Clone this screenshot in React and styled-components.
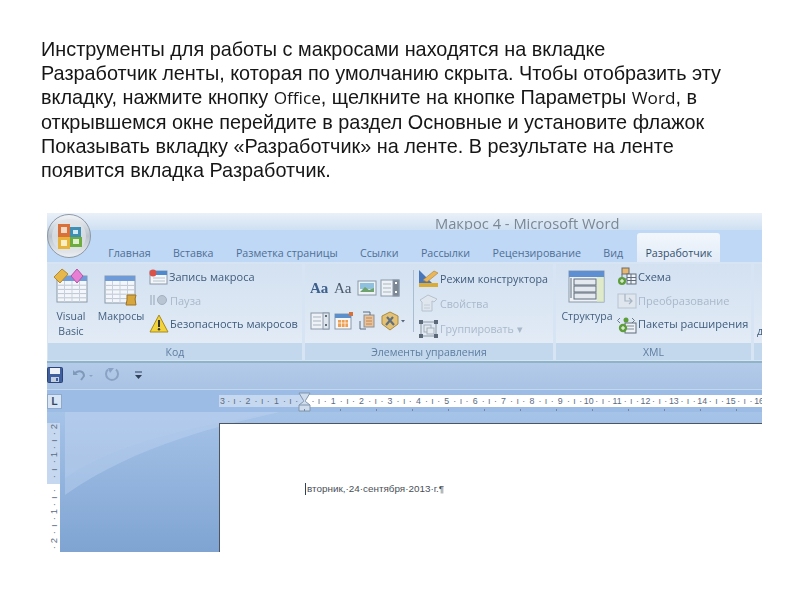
import React from "react";
import styled, { createGlobalStyle } from "styled-components";

const GlobalStyle = createGlobalStyle`
  html, body {
    margin: 0;
    background: #fff;
  }
`;

const Slide = styled.div`
  width: 800px;
  height: 600px;
  overflow: hidden;
  box-sizing: border-box;
  padding: 37px 0 0 41px;
  background: #fff;
`;

const Lead = styled.p`
  margin: 0 0 30.8px;
  font: 19.85px/24.2px "Liberation Sans", Arial, sans-serif;
  color: #161616;
  white-space: nowrap;
  filter: blur(0.3px);

  span {
    font-family: "Open Sans", sans-serif;
    font-size: 17.2px;
    line-height: 0;
  }
`;

const Word = styled.div`
  width: 715px;
  height: 339px;
  margin-left: 6px;
  display: flex;
  flex-direction: column;
  overflow: hidden;
  font-family: "Open Sans", sans-serif;
  filter: blur(0.45px);
`;

const TitleBar = styled.div`
  height: 17px;
  flex: none;
  padding-left: 388px;
  background: linear-gradient(#e9f0f8, #cfe0f3);
  color: #7c8794;
  font-size: 14.7px;
  line-height: 21px;
  white-space: nowrap;
`;

const TabBar = styled.div`
  position: relative;
  height: 32px;
  flex: none;
  box-sizing: border-box;
  display: flex;
  align-items: flex-end;
  padding-left: 50px;
  background: #bfd8f5;
`;

const Orb = styled.svg`
  position: absolute;
  left: 0;
  top: -17px;
`;

const Tab = styled.div`
  height: 29px;
  box-sizing: border-box;
  padding: 13px ${(p) => (p.$active ? "8px" : "11.2px")} 0;
  font-size: 10.7px;
  line-height: 15px;
  color: ${(p) => (p.$active ? "#33516f" : "#4f6f96")};
  white-space: nowrap;
  background: ${(p) => (p.$active ? "linear-gradient(#f2f7fc, #e1ebf7)" : "transparent")};
  border-radius: 3px 3px 0 0;
  margin-left: ${(p) => (p.$active ? "3px" : "0")};
`;

const Ribbon = styled.div`
  height: 101px;
  flex: none;
  box-sizing: border-box;
  display: flex;
  gap: 3px;
  padding: 2px 0 1px 1px;
  background: #d6e4f4;
  border-bottom: 2px solid #8fb4c8;
`;

const Group = styled.div`
  width: ${(p) => p.$w}px;
  flex: none;
  display: flex;
  flex-direction: column;
  border-radius: 3px;
  box-shadow: inset 0 0 0 1px #c6d6e8;
`;

const GroupBody = styled.div`
  flex: 1;
  display: flex;
  background: linear-gradient(#d3e1f1, #e2ebf6);
`;

const GroupLabel = styled.div`
  height: 17px;
  text-align: center;
  font-size: 10.5px;
  line-height: 18px;
  color: #5f7ea0;
  background: #c3d7ed;
`;

const LargeButton = styled.div`
  width: ${(p) => p.$w}px;
  margin-left: ${(p) => p.$ml || 0}px;
  flex: none;
  display: flex;
  flex-direction: column;
  align-items: center;
  padding-top: 2px;
  font-size: 10.5px;
  line-height: 15px;
  color: #44607f;
  text-align: center;
`;

const LargeIcon = styled.div`
  height: 41px;
  box-sizing: border-box;
  padding-bottom: ${(p) => p.$lift || 0}px;
  display: flex;
  align-items: flex-end;
  margin-bottom: 2px;
`;

const CutLabel = styled.div`
  margin: 60px 0 0 3px;
  font-size: 10.5px;
  line-height: 15px;
  color: #44607f;
`;

const SmallColumn = styled.div`
  margin-left: ${(p) => p.$ml || 0}px;
  padding-top: ${(p) => p.$pt || 1}px;
  display: flex;
  flex-direction: column;
  gap: ${(p) => p.$gap || 0}px;
`;

const SmallButton = styled.div`
  height: 23.5px;
  display: flex;
  align-items: center;
  gap: 1px;
  font-size: ${(p) => p.$size || 11}px;
  color: ${(p) => (p.$off ? "#a9b8c9" : "#3f5b7b")};
  white-space: nowrap;
`;

const StyleGrid = styled.div`
  margin: 7px 0 0 5px;
  display: grid;
  grid-template-columns: 24px 23px 23px 24px;
  grid-auto-rows: 33px;
  width: 94px;
  align-items: center;
`;

const Divider = styled.div`
  width: 1px;
  height: 62px;
  margin: 6px 0 0 9px;
  background: #a9bdd4;
`;

const QuickBar = styled.div`
  height: 27px;
  flex: none;
  box-sizing: border-box;
  display: flex;
  align-items: center;
  padding-bottom: 2px;
  background: linear-gradient(#b4cbe9, #a9c3e5);
  border-bottom: 1px solid #c3d7ef;
`;

const QuickIcon = styled.div`
  margin-left: ${(p) => p.$ml || 0}px;
  display: flex;
`;

const RulerRow = styled.div`
  height: 22px;
  flex: none;
  display: flex;
  background: #9cbce5;
`;

const CornerButton = styled.div`
  width: 15px;
  height: 15px;
  margin-top: 4px;
  flex: none;
  box-sizing: border-box;
  display: flex;
  align-items: center;
  justify-content: center;
  background: #d8e5f4;
  border: 1px solid #8ea9c9;
  font: bold 10px/10px "Liberation Sans", sans-serif;
  color: #33475f;
`;

const Ruler = styled.div`
  position: relative;
  margin: 5px 0 0 157px;
  height: 12px;
  flex: 1;
  display: flex;
  background: linear-gradient(90deg, #c6d8ef 0, #c6d8ef 85px, #fff 85px);

  &::after {
    content: "";
    position: absolute;
    left: 85px;
    right: 0;
    top: 14px;
    height: 2px;
    background: repeating-linear-gradient(90deg, #75889f 0, #75889f 1px, transparent 1px, transparent 36px);
  }
`;

const RulerUnit = styled.div`
  width: ${(p) => (p.$first ? 24 : 28.4)}px;
  flex: none;
  display: grid;
  grid-template-columns: ${(p) => (p.$first ? "7px" : "10px")} 1fr 1fr 1fr;
  text-align: center;
  font: 8.8px/12px "Liberation Sans", sans-serif;
  color: #5b6c82;
  white-space: nowrap;
`;

const Marker = styled.svg`
  position: absolute;
  left: 79px;
  top: -3px;
`;

const Workspace = styled.div`
  position: relative;
  flex: 1;
  min-height: 0;
  display: flex;
  padding-top: 11px;
  background: linear-gradient(#a6c3e8, #7fa4d2);
`;

const Shine = styled.svg`
  position: absolute;
  left: 0;
  top: 0;
`;

const VRuler = styled.div`
  position: relative;
  width: 13px;
  flex: none;
  display: flex;
  flex-direction: column;
  background: linear-gradient(#c6d8ef 0, #c6d8ef 61px, #fff 61px);
`;

const VCell = styled.span`
  height: 7.1px;
  flex: none;
  text-align: center;
  font: 9.5px/7.1px "Liberation Sans", sans-serif;
  color: #5b6c82;
  transform: rotate(-90deg);
`;

const Sheet = styled.div`
  position: relative;
  flex: 1;
  margin-left: 159px;
  box-sizing: border-box;
  padding: 59px 0 0 85px;
  background: #fff;
  border-top: 1px solid #4d5560;
  border-left: 1px solid #4d5560;
`;

const DocLine = styled.div`
  font: 9.9px/12px "Liberation Sans", sans-serif;
  color: #4a4f57;
  white-space: nowrap;
  border-left: 1.5px solid #30405a;
  padding-left: 1px;
`;

const Sheetglyph = ({ x = 0, y = 0, w, h, head = "#6f9bd8" }) => (
  <g>
    <rect x={x} y={y} width={w} height={h} fill="#f3f6fa" stroke="#8a98a8" />
    <rect x={x} y={y} width={w} height={5} fill={head} />
    {[1, 2, 3, 4].map((i) => (
      <line key={i} x1={x} x2={x + w} y1={y + 5 + (i * (h - 5)) / 5} y2={y + 5 + (i * (h - 5)) / 5} stroke="#bcc6d2" />
    ))}
    {[1, 2, 3].map((i) => (
      <line key={i} x1={x + (i * w) / 4} x2={x + (i * w) / 4} y1={y + 5} y2={y + h} stroke="#c8d1db" />
    ))}
  </g>
);

const OfficeOrb = () => (
  <Orb width="46" height="48" viewBox="0 0 46 48">
    <defs>
      <linearGradient id="orb" x1="0" y1="0" x2="0" y2="1">
        <stop offset="0" stopColor="#f4f6f8" />
        <stop offset="0.5" stopColor="#b9c2cc" />
        <stop offset="1" stopColor="#eef1f3" />
      </linearGradient>
    </defs>
    <circle cx="22" cy="23" r="21.5" fill="url(#orb)" stroke="#8d99a6" />
    <circle cx="22" cy="23" r="17" fill="#dfe4e8" opacity="0.7" />
    <rect x="11" y="11" width="12" height="13" fill="#d9703a" />
    <rect x="23" y="14" width="11" height="10" fill="#3f8fb5" />
    <rect x="11" y="24" width="12" height="12" fill="#e8b33a" />
    <rect x="23" y="24" width="12" height="10" fill="#6dad3e" />
    <rect x="14" y="14" width="6" height="6" fill="#f5d9c4" />
    <rect x="26" y="17" width="5" height="4" fill="#d2e8f2" />
    <rect x="14" y="27" width="6" height="6" fill="#fbeec5" />
    <rect x="26" y="26" width="6" height="5" fill="#e0f0cf" />
  </Orb>
);

const VisualBasicIcon = () => (
  <svg width="36" height="36" viewBox="0 0 36 36">
    <Sheetglyph x={4} y={8} w={30} h={26} />
    <path d="M1 9 9 1l6 5-8 9z" fill="#e6b84c" stroke="#b48a2c" />
    <path d="M18 8l6-7 6 7-6 7z" fill="#e77fd5" stroke="#b654a4" />
  </svg>
);

const MacroIcon = () => (
  <svg width="36" height="33" viewBox="0 0 36 33">
    <Sheetglyph x={2} y={2} w={30} h={27} />
    <path d="M24 21h9l-1 4 1 6H23l1-5z" fill="#d7a63d" stroke="#9d7424" />
  </svg>
);

const RecordIcon = () => (
  <svg width="19" height="16" viewBox="0 0 19 16">
    <rect x="1" y="2" width="17" height="13" fill="#f4f7fa" stroke="#8a98a8" />
    <rect x="1" y="2" width="17" height="4" fill="#4d89cf" />
    <circle cx="4" cy="4" r="3.5" fill="#d8544a" />
    <path d="M4 9h12M4 12h12" stroke="#b7c2ce" />
  </svg>
);

const PauseIcon = () => (
  <svg width="20" height="14" viewBox="0 0 20 14">
    <path d="M2 2v10M5 2v10" stroke="#aab9c9" strokeWidth="1.5" />
    <circle cx="13" cy="7" r="4.5" fill="#b9c5d2" stroke="#a2b0c0" />
  </svg>
);

const WarnIcon = () => (
  <svg width="20" height="19" viewBox="0 0 20 19">
    <path d="M10 1 19 18H1z" fill="#f2d33c" stroke="#a88a1c" />
    <path d="M10 6v7" stroke="#333" strokeWidth="2" />
    <circle cx="10" cy="15.3" r="1.2" fill="#333" />
  </svg>
);

const AaIcon = ({ bold }) => (
  <svg width="22" height="18" viewBox="0 0 22 18">
    <text x="0" y="14" fontFamily="Liberation Serif, serif" fontSize="15" fontWeight={bold ? 700 : 400} fill={bold ? "#3d5f8c" : "#4a5a6c"}>
      Aa
    </text>
  </svg>
);

const PictureIcon = () => (
  <svg width="20" height="18" viewBox="0 0 20 18">
    <rect x="1" y="2" width="18" height="14" fill="#eef3f8" stroke="#8a98a8" />
    <rect x="3" y="4" width="14" height="6" fill="#8fc0de" />
    <path d="M3 13 8 8l4 3 5-2v4z" fill="#6fa36d" />
  </svg>
);

const ListIcon = ({ dark }) => (
  <svg width="20" height="18" viewBox="0 0 20 18">
    <rect x="1" y="1" width="18" height="16" fill="#eef2f7" stroke="#8a98a8" />
    <rect x="13" y="1" width="6" height="16" fill={dark ? "#7d8793" : "#dfe5ec"} stroke="#8a98a8" />
    <path d="M3 5h8M3 9h8M3 13h8" stroke="#a7b3c0" />
    <path d="M15 4h2M15 13h2" stroke={dark ? "#fff" : "#5f6c7b"} strokeWidth="2" />
  </svg>
);

const CalendarIcon = () => (
  <svg width="20" height="18" viewBox="0 0 20 18">
    <rect x="1" y="2" width="16" height="15" fill="#f5f7fa" stroke="#8a98a8" />
    <rect x="1" y="2" width="16" height="4" fill="#5d8fcb" />
    <rect x="4" y="8" width="10" height="7" fill="#ef9f52" />
    <path d="M4 11h10M7.5 8v7M11 8v7" stroke="#fff" strokeWidth="0.7" />
    <rect x="15" y="0" width="4" height="4" fill="#d8703a" />
  </svg>
);

const LinkedIcon = () => (
  <svg width="20" height="20" viewBox="0 0 20 20">
    <rect x="7" y="4" width="10" height="12" fill="#e9c19a" stroke="#8a8f96" />
    <path d="M9 7h6M9 10h6M9 13h6" stroke="#c4884e" />
    <path d="M3 10v8h6M13 4V1H6" fill="none" stroke="#5b6b7d" />
  </svg>
);

const ToolsIcon = () => (
  <svg width="26" height="20" viewBox="0 0 26 20">
    <path d="M2 5 10 1l8 4v8l-8 6-8-6z" fill="#e3c277" stroke="#a98a3f" />
    <path d="M6 14 13 6M7 6l7 8" stroke="#60707f" strokeWidth="2.2" />
    <path d="M21 9h4l-2 2.5z" fill="#55677c" />
  </svg>
);

const DesignIcon = () => (
  <svg width="21" height="20" viewBox="0 0 21 20">
    <path d="M1 1v14l13-1z" fill="#4976bb" />
    <rect x="1" y="14" width="19" height="4" fill="#d9ac38" />
    <path d="M5 11 16 2l4 2L9 13z" fill="#e9b65a" stroke="#a97e30" strokeWidth="0.6" />
  </svg>
);

const PropsIcon = () => (
  <svg width="21" height="20" viewBox="0 0 21 20">
    <path d="M2 6 10 1l9 4-3 3-2-1v10H4V8z" fill="#dfe6ee" stroke="#b5c2d0" />
    <path d="M6 11h6M6 14h6" stroke="#c2ccd7" />
  </svg>
);

const GroupIcon = () => (
  <svg width="21" height="20" viewBox="0 0 21 20">
    <rect x="3" y="3" width="15" height="14" fill="none" stroke="#8c97a3" />
    <rect x="6" y="6" width="7" height="7" fill="#e2e8ef" stroke="#a4afbb" />
    <rect x="9" y="9" width="7" height="6" fill="#e2e8ef" stroke="#a4afbb" />
    {[[1, 1], [16, 1], [1, 15], [16, 15]].map(([x, y]) => (
      <rect key={x + "-" + y} x={x} y={y} width="4" height="4" fill="#5a6878" />
    ))}
  </svg>
);

const StructureIcon = () => (
  <svg width="38" height="33" viewBox="0 0 38 33">
    <rect x="1" y="1" width="35" height="31" fill="#eef2f7" stroke="#8a98a8" />
    <rect x="1" y="1" width="35" height="6" fill="#5f8fd3" />
    <rect x="29" y="7" width="7" height="25" fill="#d9e7b6" opacity="0.7" />
    {[9, 16, 23].map((y) => (
      <rect key={y} x="6" y={y} width="22" height="6" fill="#e4e9ef" stroke="#5f6c7b" />
    ))}
    <path d="M3 8v20" stroke="#5f6c7b" />
  </svg>
);

const SchemaIcon = () => (
  <svg width="20" height="19" viewBox="0 0 20 19">
    <rect x="5" y="1" width="7" height="6" fill="#e7b66f" stroke="#6d6a64" />
    <rect x="10" y="7" width="9" height="10" fill="#f0f3f7" stroke="#5f6c7b" />
    <path d="M10 10.5h9M10 13.5h9M14 7v10" stroke="#5f6c7b" />
    <path d="M5 7v5h5" fill="none" stroke="#5f6c7b" />
    <circle cx="5" cy="14" r="4" fill="#5d9e3a" />
    <path d="M3 14h4M5 12v4" stroke="#fff" />
  </svg>
);

const TransformIcon = () => (
  <svg width="20" height="17" viewBox="0 0 20 17">
    <rect x="1" y="2" width="18" height="14" fill="#dfe6ee" stroke="#b7c4d2" />
    <path d="M8 2v7h7M12 6l3 3-3 3" fill="none" stroke="#a6b4c3" strokeWidth="1.2" />
  </svg>
);

const PackIcon = () => (
  <svg width="20" height="20" viewBox="0 0 20 20">
    <path d="M3 4 0.5 6.5 3 9M15 4l2.5 2.5L15 9" fill="none" stroke="#6b7a8a" />
    <circle cx="9" cy="6" r="2.5" fill="#5d9e3a" />
    <rect x="8" y="9" width="11" height="10" fill="#eef2f7" stroke="#5f6c7b" />
    <path d="M10 12h7M10 15h7" stroke="#7f8c9a" />
    <circle cx="6" cy="14" r="4.2" fill="#5d9e3a" />
    <path d="M4 14h4M6 12v4" stroke="#fff" />
  </svg>
);

const SaveIcon = () => (
  <svg width="16" height="16" viewBox="0 0 16 16">
    <rect x="0.5" y="0.5" width="15" height="15" rx="1" fill="#3f5f9e" stroke="#2d4479" />
    <rect x="3" y="1" width="10" height="6" fill="#eef2f8" />
    <rect x="4" y="10" width="8" height="5" fill="#c3cede" />
    <rect x="9" y="11" width="2" height="3" fill="#3f5f9e" />
  </svg>
);

const UndoIcon = () => (
  <svg width="22" height="14" viewBox="0 0 22 14">
    <path d="M3 5c4-3 9-2 9 3l-3 4" fill="none" stroke="#7f99bb" strokeWidth="2" />
    <path d="M1 2v5h5z" fill="#7f99bb" />
    <path d="M17 7h4l-2 2z" fill="#8aa3c4" />
  </svg>
);

const RedoIcon = () => (
  <svg width="16" height="16" viewBox="0 0 16 16">
    <path d="M11 2.5a6 6 0 1 1-8 0" fill="none" stroke="#8aa3c4" strokeWidth="2" />
    <path d="M3 1 9 1 5 6z" fill="#8aa3c4" />
  </svg>
);

const QuickMenuIcon = () => (
  <svg width="9" height="10" viewBox="0 0 9 10">
    <path d="M1 2h7" stroke="#2f4058" />
    <path d="M1 5h7L4.5 9z" fill="#2f4058" />
  </svg>
);

const topUnits = [];
for (let n = -3; n <= 16; n++) topUnits.push(n);

const sideRuler = ["2", "·", "ı", "·", "1", "·", "ı", "·", "", "·", "ı", "·", "1", "·", "ı", "·", "2", "·"];

const App = () => (
  <Slide>
    <GlobalStyle />
    <Lead>
      Инструменты для работы с макросами находятся на вкладке
      <br />
      Разработчик ленты, которая по умолчанию скрыта. Чтобы отобразить эту
      <br />
      вкладку, нажмите кнопку <span>Office</span>, щелкните на кнопке Параметры <span>Word</span>, в
      <br />
      открывшемся окне перейдите в раздел Основные и установите флажок
      <br />
      Показывать вкладку «Разработчик» на ленте. В результате на ленте
      <br />
      появится вкладка Разработчик.
    </Lead>
    <Word>
      <TitleBar>Макрос 4 - Microsoft Word</TitleBar>
      <TabBar>
        <OfficeOrb />
        <Tab>Главная</Tab>
        <Tab>Вставка</Tab>
        <Tab>Разметка страницы</Tab>
        <Tab>Ссылки</Tab>
        <Tab>Рассылки</Tab>
        <Tab>Рецензирование</Tab>
        <Tab>Вид</Tab>
        <Tab $active>Разработчик</Tab>
      </TabBar>
      <Ribbon>
        <Group $w={254}>
          <GroupBody>
            <LargeButton $w={44} $ml={1}>
              <LargeIcon $lift={3}><VisualBasicIcon /></LargeIcon>
              Visual
              <br />
              Basic
            </LargeButton>
            <LargeButton $w={50} $ml={3}>
              <LargeIcon><MacroIcon /></LargeIcon>
              Макросы
            </LargeButton>
            <SmallColumn $ml={3}>
              <SmallButton><RecordIcon />Запись макроса</SmallButton>
              <SmallButton $off><PauseIcon />Пауза</SmallButton>
              <SmallButton><WarnIcon />Безопасность макросов</SmallButton>
            </SmallColumn>
          </GroupBody>
          <GroupLabel>Код</GroupLabel>
        </Group>
        <Group $w={248}>
          <GroupBody>
            <StyleGrid>
              <AaIcon bold />
              <AaIcon />
              <PictureIcon />
              <ListIcon dark />
              <ListIcon />
              <CalendarIcon />
              <LinkedIcon />
              <ToolsIcon />
            </StyleGrid>
            <Divider />
            <SmallColumn $ml={4} $pt={3} $gap={1.5}>
              <SmallButton $size={10.7}><DesignIcon />Режим конструктора</SmallButton>
              <SmallButton $size={10.7} $off><PropsIcon />Свойства</SmallButton>
              <SmallButton $size={10.7} $off><GroupIcon />Группировать ▾</SmallButton>
            </SmallColumn>
          </GroupBody>
          <GroupLabel>Элементы управления</GroupLabel>
        </Group>
        <Group $w={195}>
          <GroupBody>
            <LargeButton $w={56} $ml={3}>
              <LargeIcon $lift={4}><StructureIcon /></LargeIcon>
              Структура
            </LargeButton>
            <SmallColumn $ml={2}>
              <SmallButton><SchemaIcon />Схема</SmallButton>
              <SmallButton $off><TransformIcon />Преобразование</SmallButton>
              <SmallButton><PackIcon />Пакеты расширения</SmallButton>
            </SmallColumn>
          </GroupBody>
          <GroupLabel>XML</GroupLabel>
        </Group>
        <Group $w={20}>
          <GroupBody>
            <CutLabel>д</CutLabel>
          </GroupBody>
          <GroupLabel />
        </Group>
      </Ribbon>
      <QuickBar>
        <QuickIcon><SaveIcon /></QuickIcon>
        <QuickIcon $ml={9}><UndoIcon /></QuickIcon>
        <QuickIcon $ml={11}><RedoIcon /></QuickIcon>
        <QuickIcon $ml={13}><QuickMenuIcon /></QuickIcon>
      </QuickBar>
      <RulerRow>
        <CornerButton>L</CornerButton>
        <Ruler>
          {topUnits.map((n) => (
            <RulerUnit key={n} $first={n === -3}>
              <span>{Math.abs(n) || ""}</span>
              {n < 16 && <span>·</span>}
              {n < 16 && <span>ı</span>}
              {n < 16 && <span>·</span>}
            </RulerUnit>
          ))}
          <Marker width="13" height="20" viewBox="0 0 13 20">
            <path d="M1 1h11L7.5 8.5v1l4.5 3.5v6H1v-6l4.5-3.5v-1z" fill="#cfdcec" stroke="#8296ad" />
            <path d="M1 13h11" stroke="#8296ad" />
          </Marker>
        </Ruler>
      </RulerRow>
      <Workspace>
        <Shine width="715" height="140" viewBox="0 0 715 140">
          <path d="M18 0H233C180 12 90 32 18 83z" fill="#bcd2ef" opacity="0.45" />
          <path d="M18 0H233C150 14 70 30 18 66z" fill="#bcd2ef" opacity="0.2" />
        </Shine>
        <VRuler>
          {sideRuler.map((c, i) => (
            <VCell key={i}>{c}</VCell>
          ))}
        </VRuler>
        <Sheet>
          <DocLine>вторник,·24·сентября·2013·г.¶</DocLine>
        </Sheet>
      </Workspace>
    </Word>
  </Slide>
);

export default App;
